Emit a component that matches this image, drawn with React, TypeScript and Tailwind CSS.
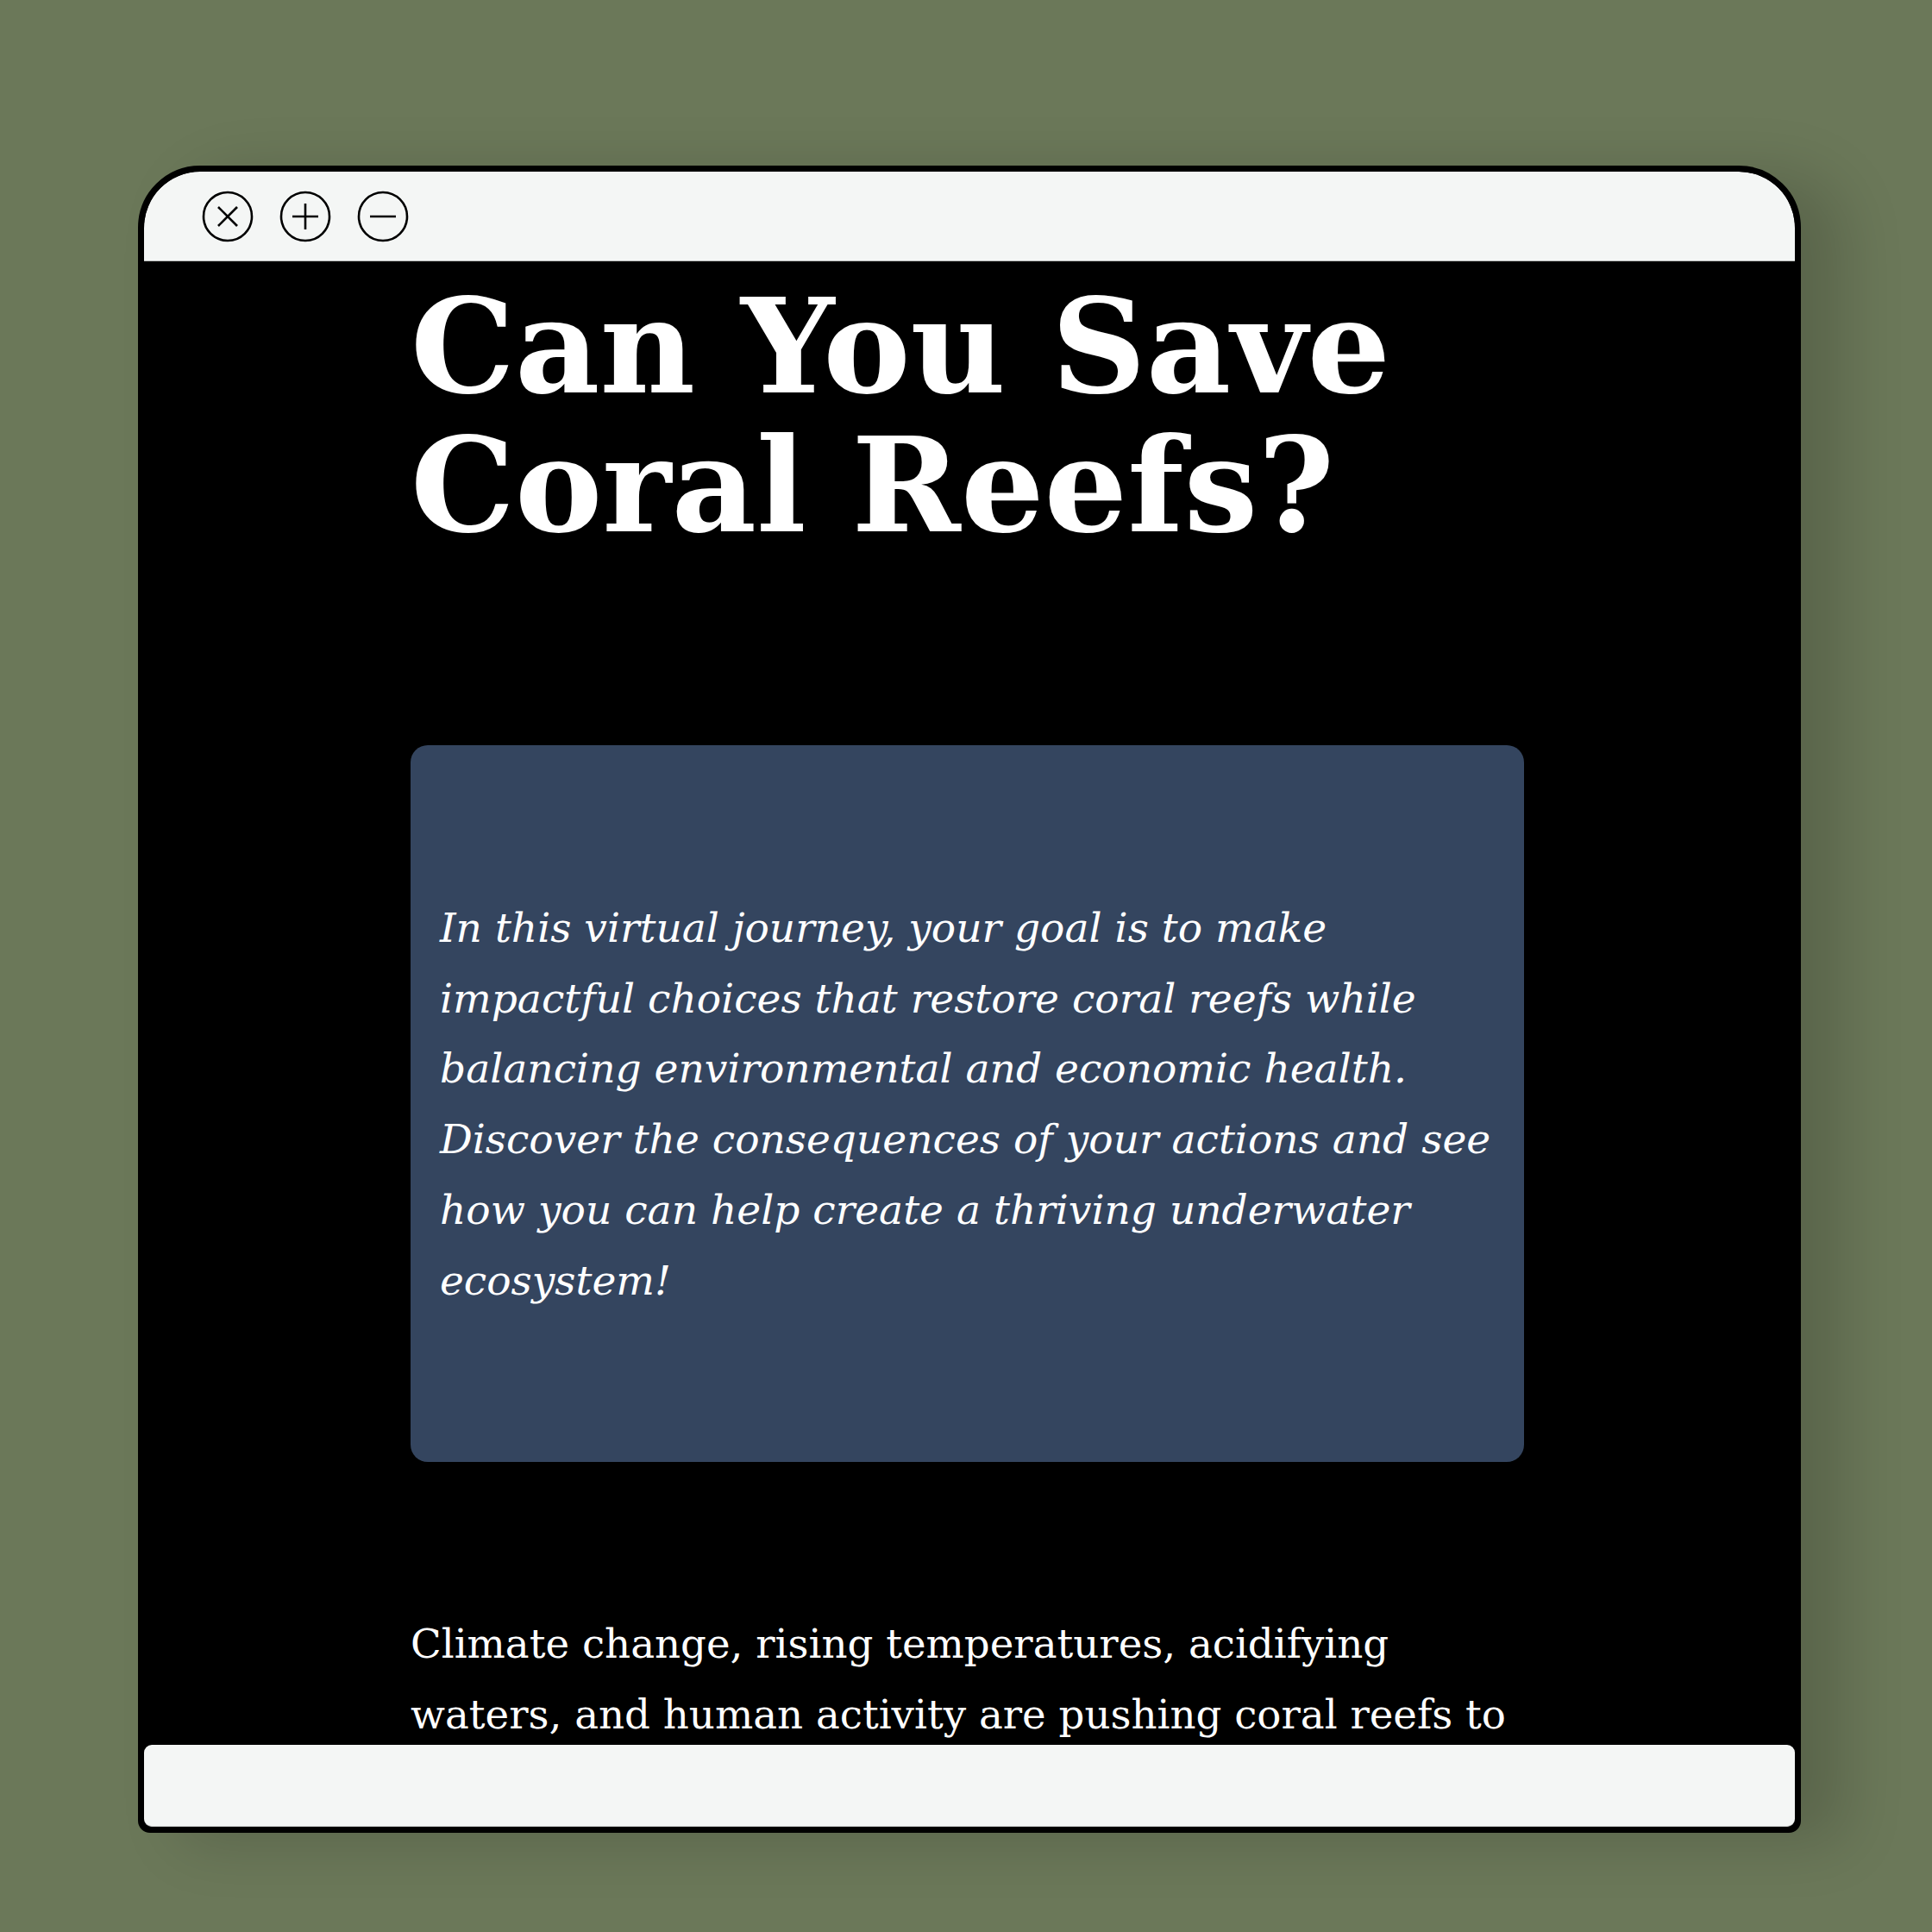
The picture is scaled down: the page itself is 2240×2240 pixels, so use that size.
import React from "react";

function CloseIcon() {
  return (
    <svg width="60" height="60" viewBox="0 0 60 60" fill="none" stroke="#000" strokeWidth="2.6" strokeLinecap="butt">
      <circle cx="30" cy="30" r="28" />
      <line x1="19" y1="19" x2="41" y2="41" />
      <line x1="41" y1="19" x2="19" y2="41" />
    </svg>
  );
}
function PlusIcon() {
  return (
    <svg width="60" height="60" viewBox="0 0 60 60" fill="none" stroke="#000" strokeWidth="2.6">
      <circle cx="30" cy="30" r="28" />
      <line x1="15" y1="30" x2="45" y2="30" />
      <line x1="30" y1="15" x2="30" y2="45" />
    </svg>
  );
}
function MinusIcon() {
  return (
    <svg width="60" height="60" viewBox="0 0 60 60" fill="none" stroke="#000" strokeWidth="2.6">
      <circle cx="30" cy="30" r="28" />
      <line x1="15" y1="30" x2="45" y2="30" />
    </svg>
  );
}

export default function App() {
  const serif = { fontFamily: '"DejaVu Serif", "Liberation Serif", serif' };
  return (
    <div className="w-[2240px] h-[2240px] bg-[#6b7859] pt-[192px] pl-[160px]" style={serif}>
      <div className="w-[1928px] h-[1933px] bg-black border-[7px] border-black rounded-t-[72px] rounded-b-[14px] flex flex-col overflow-hidden shadow-[50px_10px_70px_rgba(0,0,0,0.16)]">
        <div className="h-[104px] shrink-0 bg-[#f4f6f5] border-b-[1.5px] border-[#b9bcbb] rounded-t-[65px] flex items-center pl-[67px] gap-[30px]">
          <CloseIcon />
          <PlusIcon />
          <MinusIcon />
        </div>
        <div className="flex-1 overflow-hidden bg-black">
          <div className="ml-[309px] w-[1291px] pt-[18px] text-white">
            <h1 className="text-[152px] leading-[161px] font-bold">
              Can You Save
              <br />
              Coral Reefs?
            </h1>
            <div className="mt-[221px] rounded-[20px] bg-[#34455f] pl-[34px] pr-[20px] pt-[171px] pb-[170px]">
              <p className="italic text-[47.1px] leading-[81.7px] whitespace-nowrap">
                In this virtual journey, your goal is to make
                <br />
                impactful choices that restore coral reefs while
                <br />
                balancing environmental and economic health.
                <br />
                Discover the consequences of your actions and see
                <br />
                how you can help create a thriving underwater
                <br />
                ecosystem!
              </p>
            </div>
            <p className="mt-[171px] text-[46.7px] leading-[81.7px] whitespace-nowrap">
              Climate change, rising temperatures, acidifying
              <br />
              waters, and human activity are pushing coral reefs to
            </p>
          </div>
        </div>
        <div className="h-[95px] shrink-0 bg-[#f4f6f5] rounded-[9px] border-b-[1.5px] border-[#c4c7c6]" />
      </div>
    </div>
  );
}
